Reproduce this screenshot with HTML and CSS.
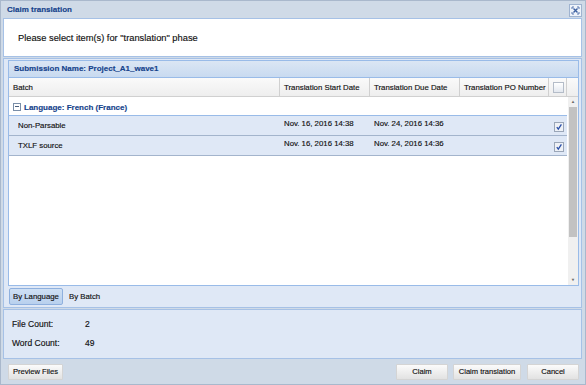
FILE: index.html
```html
<!DOCTYPE html>
<html lang="en">

<head>
    <meta charset="UTF-8">
    <title>Claim translation</title>
    <link rel="stylesheet" href="styles.css">
</head>

<body>
    <div class="win">
        <div class="win-title">
            <span class="title-text">Claim translation</span>
            <span class="close">
                <svg width="11" height="11" viewBox="0 0 11 11">
                    <path d="M3.5 3.5 L7.5 7.5 M7.5 3.5 L3.5 7.5" stroke="#3b5fa0" stroke-width="1.4" />
                    <path d="M2 2 h2 M2 2 v2 M9 2 h-2 M9 2 v2 M2 9 h2 M2 9 v-2 M9 9 h-2 M9 9 v-2" stroke="#5a78b0" stroke-width="1" />
                </svg>
            </span>
        </div>

        <div class="prompt">Please select item(s) for "translation" phase</div>

        <div class="main">
            <div class="grid">
                <div class="grid-caption">Submission Name: Project_A1_wave1</div>
                <div class="grid-head">
                    <div class="hd c-batch">Batch</div>
                    <div class="hd c-date">Translation Start Date</div>
                    <div class="hd c-date">Translation Due Date</div>
                    <div class="hd c-po">Translation PO Number</div>
                    <div class="hd c-chk"><span class="cb"></span></div>
                    <div class="hd c-sb"></div>
                </div>
                <div class="grid-body">
                    <div class="rows">
                        <div class="group"><span class="minus"></span>Language: French (France)</div>
                        <div class="row">
                            <div class="cell c-batch pad">Non-Parsable</div>
                            <div class="cell c-date">Nov. 16, 2016 14:38</div>
                            <div class="cell c-date">Nov. 24, 2016 14:36</div>
                            <div class="cell c-po"></div>
                            <div class="cell c-chk">
                                <svg width="10" height="10" viewBox="0 0 10 10">
                                    <rect x="0.5" y="0.5" width="9" height="9" fill="#eef1f6" stroke="#9aa6b8" />
                                    <path d="M2.8 5.2 L4.3 7.2 L7.4 2.4" fill="none" stroke="#2a4fa8" stroke-width="1.3" />
                                </svg>
                            </div>
                        </div>
                        <div class="row">
                            <div class="cell c-batch pad">TXLF source</div>
                            <div class="cell c-date">Nov. 16, 2016 14:38</div>
                            <div class="cell c-date">Nov. 24, 2016 14:36</div>
                            <div class="cell c-po"></div>
                            <div class="cell c-chk">
                                <svg width="10" height="10" viewBox="0 0 10 10">
                                    <rect x="0.5" y="0.5" width="9" height="9" fill="#eef1f6" stroke="#9aa6b8" />
                                    <path d="M2.8 5.2 L4.3 7.2 L7.4 2.4" fill="none" stroke="#2a4fa8" stroke-width="1.3" />
                                </svg>
                            </div>
                        </div>
                    </div>
                    <div class="scroll">
                        <div class="arr">&#9650;</div>
                        <div class="thumb"></div>
                        <div class="track"></div>
                        <div class="arr">&#9660;</div>
                    </div>
                </div>
            </div>
            <div class="tabs">
                <span class="tab on">By Language</span>
                <span class="tab">By Batch</span>
            </div>
        </div>

        <div class="info">
            <div class="info-row"><span class="lbl">File Count:</span><span>2</span></div>
            <div class="info-row"><span class="lbl">Word Count:</span><span>49</span></div>
        </div>

        <div class="footer">
            <button class="btn btn-preview">Preview Files</button>
            <div class="spacer"></div>
            <button class="btn btn-claim">Claim</button>
            <button class="btn btn-claimtr">Claim translation</button>
            <button class="btn btn-cancel">Cancel</button>
        </div>
    </div>
</body>

</html>
```

FILE: styles.css
```css
body {
    margin: 0;
    background: #ffffff;
    font-family: "Liberation Sans", Arial, sans-serif;
    color: #111;
}

.win {
    width: 586px;
    height: 385px;
    box-sizing: border-box;
    border: 1px solid #a9b8cc;
    background: #cfdae7;
    display: flex;
    flex-direction: column;
    padding: 0 3px 0 2px;
    -webkit-text-stroke: 0.15px;
}

.win-title {
    height: 17px;
    display: flex;
    align-items: center;
    padding-left: 4px;
    flex-shrink: 0;
}

.title-text {
    font-weight: bold;
    font-size: 8px;
    color: #15428b;
    flex: 1;
}

.close {
    width: 11px;
    height: 11px;
    border: 1px solid #9fb3d0;
    background: #eef3fa;
    display: flex;
    margin-top: 1px;
}

.prompt {
    height: 37px;
    border: 1px solid #a6c1e6;
    background: #ffffff;
    display: flex;
    align-items: center;
    padding-left: 14px;
    font-size: 9.3px;
    flex-shrink: 0;
}

.main {
    margin-top: 1px;
    border: 1px solid #a6c1e6;
    background: #dfe8f6;
    padding: 1px 2px 0 4px;
    flex-shrink: 0;
}

.grid {
    border: 1px solid #99bbe8;
    background: #ffffff;
    font-size: 7.8px;
}

.grid-caption {
    height: 16px;
    line-height: 16px;
    padding-left: 5px;
    font-weight: bold;
    font-size: 8px;
    color: #15428b;
    background: linear-gradient(#dbe6f4, #c8daf0);
    border-bottom: 1px solid #99bbe8;
}

.grid-head {
    display: flex;
    height: 18px;
    background: linear-gradient(#fafafa, #eeeeee);
    border-bottom: 1px solid #d0d0d0;
}

.hd {
    display: flex;
    align-items: center;
    padding-left: 4px;
    box-sizing: border-box;
    border-right: 1px solid #d0d0d0;
}

.c-batch { width: 271px; }
.c-date { width: 90px; }
.c-po { width: 89px; }
.c-chk { width: 18px; }
.c-sb { width: 11px; border-right: none; }

.cb {
    width: 9px;
    height: 9px;
    border: 1px solid #b4bcc8;
    background: linear-gradient(#ffffff, #e3e8ef);
}

.grid-body {
    height: 188px;
    display: flex;
}

.rows {
    width: 558px;
}

.group {
    height: 19px;
    display: flex;
    align-items: center;
    padding-left: 4px;
    font-weight: bold;
    font-size: 8px;
    color: #15428b;
    border-bottom: 1px solid #99bbe8;
    box-sizing: border-box;
    padding-top: 2px;
}

.minus {
    width: 6px;
    height: 6px;
    border: 1px solid #7a8ea8;
    margin-right: 3px;
    position: relative;
}

.minus::after {
    content: "";
    position: absolute;
    left: 1px;
    top: 2px;
    width: 4px;
    height: 1px;
    background: #4a5f7c;
}

.row {
    display: flex;
    height: 19px;
    background: #dfe8f6;
    border-bottom: 1px solid #a3b4cc;
}

.cell {
    box-sizing: border-box;
    padding-left: 4px;
    padding-top: 3px;
}

.cell.pad {
    padding-left: 9px;
    padding-top: 5px;
}

.cell.c-chk {
    padding-left: 5px;
    padding-top: 6px;
}

.scroll {
    width: 11px;
    margin-left: 1px;
    display: flex;
    flex-direction: column;
    background: #f0f0f0;
}

.arr {
    height: 10px;
    font-size: 4px;
    color: #666;
    text-align: center;
    line-height: 10px;
}

.thumb {
    height: 130px;
    background: #c2c2c2;
    margin: 0 1px;
}

.track {
    flex: 1;
}

.tabs {
    height: 21px;
    display: flex;
    align-items: center;
    gap: 2px;
    padding-left: 1px;
}

.tab {
    font-size: 7.8px;
    padding: 3px 3px;
    border: 1px solid transparent;
    border-radius: 2px;
}

.tab.on {
    background: linear-gradient(#cfe0f4, #b8d0ee);
    border-color: #8fb0de;
}

.info {
    margin-top: 1px;
    height: 44px;
    border: 1px solid #a6c1e6;
    background: #dfe8f6;
    padding: 4px 0 0 8px;
    flex-shrink: 0;
    font-size: 8.5px;
}

.info-row {
    display: flex;
    height: 19px;
    align-items: center;
}

.lbl {
    width: 73px;
}

.footer {
    flex: 1;
    display: flex;
    align-items: center;
    padding: 0 3px 0 5px;
}

.spacer {
    flex: 1;
}

.btn {
    font-family: "Liberation Sans", Arial, sans-serif;
    font-size: 7.6px;
    color: #111;
    height: 16px;
    padding: 0;
    border: 1px solid #d4d4d4;
    border-radius: 1px;
    background: linear-gradient(#fbfbfb, #e2e2e2);
    -webkit-text-stroke: 0.15px;
}

.btn-preview { width: 55px; }
.btn-claim { width: 52px; margin-right: 5px; }
.btn-claimtr { width: 68px; margin-right: 6px; }
.btn-cancel { width: 52px; }
```
